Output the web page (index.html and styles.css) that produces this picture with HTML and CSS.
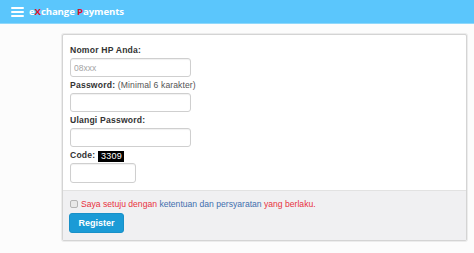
FILE: index.html
```html
<!DOCTYPE html>
<html>
<head>
<meta charset="utf-8">
<link rel="stylesheet" href="styles.css">
</head>
<body>
<header class="topbar">
  <span class="burger"><i></i><i></i><i></i></span>
  <span class="brand">e<b class="red">X</b>change <b class="red">P</b>ayments</span>
</header>
<main class="wrap">
  <form class="panel">
    <div class="panel-body">
      <label class="lbl">Nomor HP Anda:</label>
      <input class="field" type="text" placeholder="08xxx">
      <label class="lbl">Password: <span class="hint">(Minimal 6 karakter)</span></label>
      <input class="field" type="password">
      <label class="lbl">Ulangi Password:</label>
      <input class="field" type="password">
      <label class="lbl">Code: <span class="code">3309</span></label>
      <input class="field field-code" type="text">
    </div>
    <div class="panel-footer">
      <div class="agree"><input class="check" type="checkbox"><span class="red-t">Saya setuju dengan</span> <span class="blue-t">ketentuan dan persyaratan</span> <span class="red-t">yang berlaku.</span></div>
      <button class="btn" type="button">Register</button>
    </div>
  </form>
</main>
</body>
</html>
```
FILE: styles.css
```css
* { box-sizing: border-box; }
html, body { margin: 0; padding: 0; }
body {
  background: #fcfcfc;
  font-family: "Liberation Sans", Arial, sans-serif;
  color: #333;
  width: 474px;
  height: 253px;
  overflow: hidden;
}
.topbar {
  height: 24px;
  background: #5bc6fc;
  border-bottom: 1px solid #8fd8fb;
  display: flex;
  align-items: center;
  padding-left: 11px;
}
.burger {
  display: flex;
  flex-direction: column;
  gap: 2px;
  width: 13px;
  margin-right: 5px;
}
.burger i {
  display: block;
  height: 2px;
  background: #fff;
  border-radius: 1px;
}
.brand {
  color: #fff;
  font-family: "Open Sans", "DejaVu Sans", sans-serif;
  font-weight: 700;
  font-size: 9.6px;
  letter-spacing: -0.1px;
}
.brand .red { color: #e0102a; font-weight: 700; }
.wrap {
  padding-top: 10px;
  padding-left: 62px;
}
.panel {
  margin: 0;
  width: 405px;
  background: #fff;
  border: 1px solid #d4d4d4;
  box-shadow: 0 0 0 1px #ececec;
  border-radius: 2px;
}
.panel-body {
  padding: 7px 7px 7px 7px;
}
.lbl {
  display: block;
  font-size: 8.6px;
  font-weight: 700;
  line-height: 16px;
  height: 16px;
  color: #333;
  letter-spacing: 0.2px;
}
.hint { font-weight: 400; color: #555; letter-spacing: 0.1px; }
.code {
  display: inline-block;
  background: #000;
  color: #fff;
  font-weight: 400;
  font-size: 9px;
  line-height: 11px;
  padding: 0 2px 0 3px;
  vertical-align: -1px;
  letter-spacing: 0.3px;
}
.field {
  display: block;
  width: 121px;
  height: 19px;
  margin: 0;
  border: 1px solid #cfcfcf;
  border-radius: 3px;
  box-shadow: inset 0 1px 1px rgba(0,0,0,0.06);
  background: #fff;
  padding: 0 3px;
  font-family: "Liberation Sans", Arial, sans-serif;
  font-size: 8.5px;
  color: #555;
}
.field::placeholder { color: #a4a4a4; }
.field-code { width: 66px; height: 20px; }
.panel-footer {
  background: #f0f0f2;
  border-top: 1px solid #e2e2e2;
  padding: 6px 6px 7px 6px;
}
.agree {
  height: 15px;
  line-height: 15px;
  font-size: 8.6px;
  white-space: nowrap;
}
.check {
  appearance: none;
  -webkit-appearance: none;
  display: inline-block;
  vertical-align: -1px;
  width: 8px;
  height: 8px;
  margin: 0 3px 0 1px;
  border: 1px solid #b4b4b4;
  border-radius: 2px;
  background: #e8e8e8;
}
.red-t { color: #e8323e; }
.blue-t { color: #3f6fae; }
.btn {
  display: block;
  margin-top: 1px;
  width: 55px;
  height: 20px;
  background: #1b9bd6;
  color: #fff;
  border: 1px solid #1890c8;
  border-radius: 3px;
  font-family: "Liberation Sans", Arial, sans-serif;
  font-weight: 700;
  font-size: 9px;
  padding: 0;
}
```
